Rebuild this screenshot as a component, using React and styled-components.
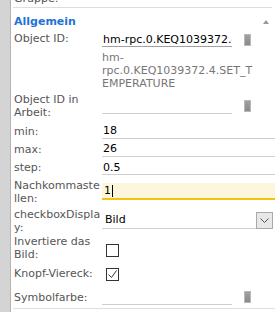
import styled, { createGlobalStyle } from "styled-components";

const Global = createGlobalStyle`
  html, body { margin: 0; padding: 0; background: #fff; }
  body {
    font-family: "DejaVu Sans", Verdana, sans-serif;
    font-size: 11px;
  }
`;

const Page = styled.div`
  display: flex;
  width: 277px;
  height: 312px;
  overflow: hidden;
`;

const SideStrip = styled.div`
  flex: 0 0 10px;
  background: #d4d4d4;
  border-right: 1px solid #b3b3b3;
`;

const Panel = styled.div`
  flex: 1;
  margin-top: -8px;
  padding: 0 2px;
`;

const GroupRow = styled.div`
  color: #555;
  line-height: 13px;
  padding: 0 0 2px 1px;
  margin-right: 3px;
  border-bottom: 1px solid #dedede;
`;

const Header = styled.div`
  display: flex;
  align-items: center;
  justify-content: space-between;
  padding: 7px 0 1px 1px;
  line-height: 13px;
`;

const HeaderTitle = styled.span`
  color: #1f74d6;
  font-weight: bold;
`;

const Collapse = styled.span`
  width: 0;
  height: 0;
  margin-right: 6px;
  border-left: 3px solid transparent;
  border-right: 3px solid transparent;
  border-bottom: 4px solid #999;
`;

const Form = styled.div`
  border-bottom: 1px solid #dedede;
`;

const Field = styled.div`
  display: grid;
  grid-template-columns: 89px 1fr;
  align-items: ${(p) => (p.$top ? "start" : "center")};
  min-height: ${(p) => p.$h || 18}px;
  padding: ${(p) => (p.$top ? "3px 0 0" : "0")};
`;

const Label = styled.div`
  color: #555;
  line-height: 13px;
  padding-left: 1px;
  overflow-wrap: anywhere;
`;

const Value = styled.div`
  min-width: 0;
  padding-top: ${(p) => p.$offset || 0}px;
`;

const InputRow = styled.div`
  display: flex;
  align-items: center;
`;

const TextInput = styled.input`
  box-sizing: border-box;
  display: block;
  width: ${(p) => p.$width || "100%"};
  height: 15px;
  padding: 0 0 0 1px;
  border: none;
  border-bottom: 1px solid ${(p) => (p.$dark ? "#a0a0a0" : "#cfcfcf")};
  background: transparent;
  font: inherit;
  color: #000;
  outline: none;
`;

const PickButton = styled.span`
  flex: 0 0 auto;
  width: 5px;
  height: 10px;
  margin-left: 12px;
  background: linear-gradient(#a0a0a0, #8a8a8a);
  border: 1px solid #b9b9b9;
`;

const Description = styled.div`
  width: 155px;
  margin-top: 4px;
  color: #777;
  line-height: 13px;
  overflow-wrap: anywhere;
`;

const FocusField = styled.div`
  box-sizing: border-box;
  display: flex;
  align-items: center;
  height: 17px;
  padding-left: 2px;
  background: #fdf6dd;
  border-bottom: 2px solid #f4c20d;
  color: #000;
`;

const Caret = styled.span`
  width: 1px;
  height: 12px;
  margin-left: 1px;
  background: #000;
`;

const Select = styled.div`
  display: flex;
  align-items: flex-end;
`;

const SelectValue = styled.div`
  flex: 1;
  height: 15px;
  line-height: 14px;
  padding-left: 3px;
  border-bottom: 1px solid #cfcfcf;
  color: #000;
`;

const DropButton = styled.div`
  box-sizing: border-box;
  display: flex;
  align-items: center;
  justify-content: center;
  width: 17px;
  height: 17px;
  margin-right: 2px;
  background: #e8e8e8;
  border: 1px solid #a9a9a9;
`;

const CheckBox = styled.span`
  box-sizing: border-box;
  display: flex;
  align-items: center;
  justify-content: center;
  width: 13px;
  height: 13px;
  margin-left: 4px;
  border: 1px solid #333;
  background: #fff;
`;

const Chevron = () => (
  <svg width="9" height="6" viewBox="0 0 9 6">
    <polyline points="0.5,0.5 4.5,4.5 8.5,0.5" fill="none" stroke="#555" strokeWidth="1" />
  </svg>
);

const Check = () => (
  <svg width="11" height="11" viewBox="0 0 11 11">
    <polyline points="1.5,5.5 4.5,8.5 9.5,1.5" fill="none" stroke="#333" strokeWidth="1" />
  </svg>
);

const numberRows = [
  { label: "min:", value: "18", h: 18 },
  { label: "max:", value: "26", h: 18 },
  { label: "step:", value: "0.5", h: 19 },
];

export default function App() {
  return (
    <>
      <Global />
      <Page>
        <SideStrip />
        <Panel>
          <GroupRow>Gruppe:</GroupRow>
          <Header>
            <HeaderTitle>Allgemein</HeaderTitle>
            <Collapse />
          </Header>
          <Form>
            <Field $top>
              <Label>Object ID:</Label>
              <Value>
                <InputRow>
                  <TextInput $width="130px" $dark readOnly defaultValue="hm-rpc.0.KEQ1039372.4.SET_TEMPERATURE" />
                  <PickButton />
                </InputRow>
                <Description>hm-rpc.0.KEQ1039372.4.SET_TEMPERATURE</Description>
              </Value>
            </Field>

            <Field $h={32}>
              <Label>Object ID in Arbeit:</Label>
              <Value>
                <InputRow>
                  <TextInput $width="130px" readOnly defaultValue="" />
                  <PickButton />
                </InputRow>
              </Value>
            </Field>

            {numberRows.map((r) => (
              <Field key={r.label} $h={r.h}>
                <Label>{r.label}</Label>
                <Value>
                  <TextInput readOnly defaultValue={r.value} />
                </Value>
              </Field>
            ))}

            <Field $h={29}>
              <Label>Nachkommastellen:</Label>
              <Value>
                <FocusField>
                  1<Caret />
                </FocusField>
              </Value>
            </Field>

            <Field $h={29}>
              <Label>checkboxDisplay:</Label>
              <Value>
                <Select>
                  <SelectValue>Bild</SelectValue>
                  <DropButton>
                    <Chevron />
                  </DropButton>
                </Select>
              </Value>
            </Field>

            <Field $h={25}>
              <Label>Invertiere das Bild:</Label>
              <Value $offset={5}>
                <CheckBox />
              </Value>
            </Field>

            <Field $h={25}>
              <Label>Knopf-Viereck:</Label>
              <Value $offset={2}>
                <CheckBox>
                  <Check />
                </CheckBox>
              </Value>
            </Field>

            <Field $h={22}>
              <Label>Symbolfarbe:</Label>
              <Value>
                <InputRow>
                  <TextInput $width="130px" readOnly defaultValue="" />
                  <PickButton />
                </InputRow>
              </Value>
            </Field>
          </Form>
        </Panel>
      </Page>
    </>
  );
}
